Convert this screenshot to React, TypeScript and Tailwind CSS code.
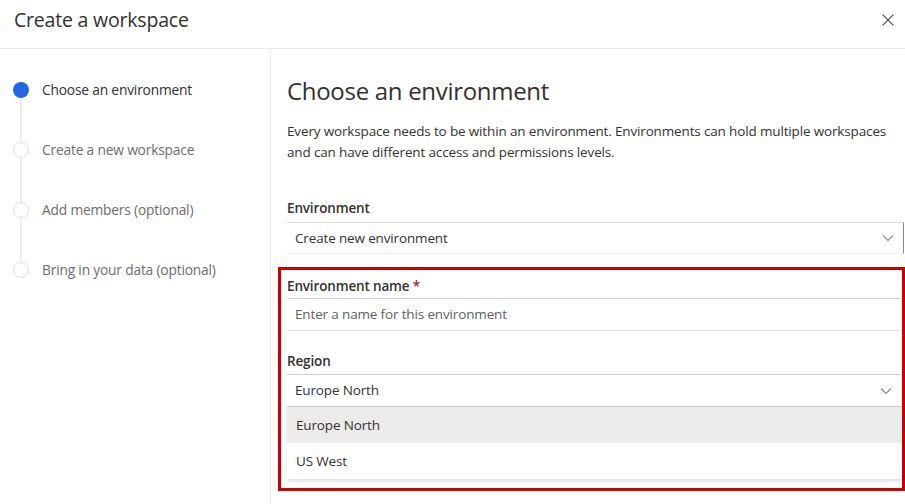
import React from "react";

const Chevron = () => (
  <svg width="12" height="8" viewBox="0 0 12 8" fill="none">
    <path d="M1 1.5 L6 6.5 L11 1.5" stroke="#8a8886" strokeWidth="1.1" />
  </svg>
);

const steps = [
  { label: "Choose an environment", active: true },
  { label: "Create a new workspace", active: false },
  { label: "Add members (optional)", active: false },
  { label: "Bring in your data (optional)", active: false },
];

export default function App() {
  return (
    <div
      className="w-[905px] h-[504px] bg-white overflow-hidden text-[#323130] flex flex-col"
      style={{ fontFamily: '"Segoe UI", "Open Sans", sans-serif' }}
    >
      <div className="h-[49px] shrink-0 flex items-center justify-between pl-[14px] pr-[5px] border-b border-[#edebe9]">
        <div className="text-[19.5px] font-medium leading-none -mt-[9px] tracking-[-0.2px]">Create a workspace</div>
        <svg width="24" height="24" viewBox="0 0 24 24" className="-mt-[9px]">
          <path d="M6.5 6.5 L17.5 17.5 M17.5 6.5 L6.5 17.5" stroke="#605e5c" strokeWidth="1.1" />
        </svg>
      </div>
      <div className="flex flex-1">
        <div className="w-[271px] shrink-0 border-r border-[#edebe9] pt-[33px] pl-[13px]">
          {steps.map((s, i) => (
            <div key={s.label} className="flex">
              <div className="flex flex-col items-center w-[16px]">
                {s.active ? (
                  <div className="w-[16px] h-[16px] rounded-full bg-[#2266e3]" />
                ) : (
                  <div className="w-[16px] h-[16px] rounded-full border-[1.5px] border-[#e1dfdd] bg-white" />
                )}
                {i < steps.length - 1 && <div className="w-[2px] h-[44px] bg-[#edebe9]" />}
              </div>
              <div
                className={
                  "ml-[13px] text-[13.8px] leading-[16px] tracking-[-0.2px] " +
                  (s.active ? "text-[#323130]" : "text-[#6e6c6a]")
                }
              >
                {s.label}
              </div>
            </div>
          ))}
        </div>
        <div className="flex-1 pl-[16px] pt-[27px]">
          <div className="text-[24px] leading-[30px] font-normal tracking-[-0.3px]">Choose an environment</div>
          <div className="mt-[15px] text-[13.5px] leading-[21px] w-[612px] tracking-[-0.15px]">
            Every workspace needs to be within an environment. Environments can hold multiple workspaces and can have
            different access and permissions levels.
          </div>
          <div className="mt-[35px] text-[13.5px] font-semibold leading-[20px] tracking-[-0.15px]">Environment</div>
          <div className="mt-[4px] h-[32px] w-[617px] border-t border-[#e1dfdd] border-b border-b-[#f3f2f1] border-r border-r-[#8a8886] flex items-center justify-between pl-[8px] pr-[9px]">
            <span className="text-[13.5px] tracking-[-0.15px]">Create new environment</span>
            <Chevron />
          </div>
          <div className="mt-[13px] -ml-[9px] w-[627px] h-[224px] border-[3px] border-[#c80000] pl-[6px] pt-[6px]">
            <div className="text-[13.5px] font-semibold leading-[20px] tracking-[-0.15px]">
              Environment name <span className="text-[#a4262c]">*</span>
            </div>
            <div className="mt-[2px] h-[33px] w-[614px] border-t-[1.5px] border-[#d2d0ce] border-b-[1.5px] border-b-[#e1dfdd] flex items-center pl-[8px]">
              <span className="text-[13.5px] text-[#605e5c] tracking-[-0.15px]">Enter a name for this environment</span>
            </div>
            <div className="mt-[20px] text-[13.5px] font-semibold leading-[20px] tracking-[-0.15px]">Region</div>
            <div className="mt-[3px] h-[32px] w-[614px] border-t border-[#d2d0ce] flex items-center justify-between pl-[8px] pr-[9px]">
              <span className="text-[13.5px] tracking-[-0.15px]">Europe North</span>
              <Chevron />
            </div>
            <div className="w-[615px] border-t-[1.5px] border-[#c8c6c4] shadow-[0_2px_4px_rgba(0,0,0,0.14)]">
              <div className="h-[36px] bg-[#edebe9] flex items-center pl-[9px] text-[13.5px] tracking-[-0.15px]">
                Europe North
              </div>
              <div className="h-[36px] bg-white flex items-center pl-[9px] text-[13.5px] tracking-[-0.15px]">
                US West
              </div>
            </div>
          </div>
        </div>
      </div>
    </div>
  );
}
